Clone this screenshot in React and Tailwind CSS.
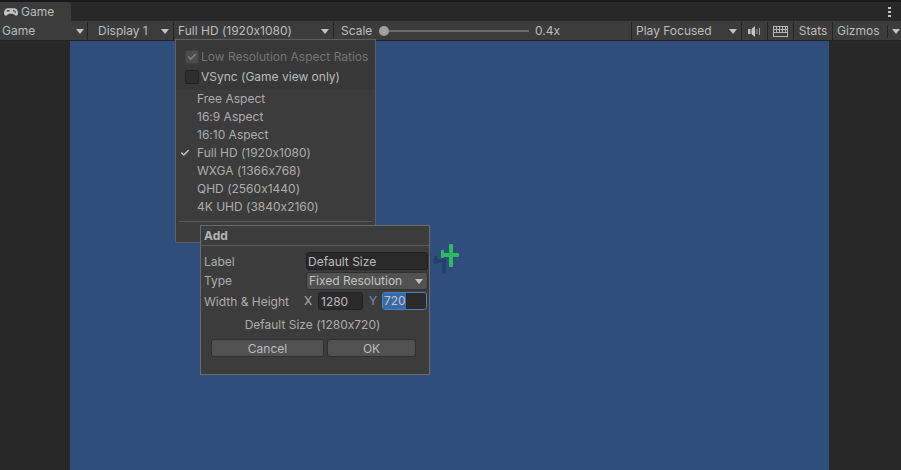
import { Check } from 'lucide-react';

const aspects = ['Free Aspect', '16:9 Aspect', '16:10 Aspect', 'Full HD (1920x1080)', 'WXGA (1366x768)', 'QHD (2560x1440)', '4K UHD (3840x2160)'];

function Arrow({ className = '' }) {
  return <span className={`w-0 h-0 border-l-[4.5px] border-r-[4.5px] border-t-[5px] border-l-transparent border-r-transparent border-t-[#c4c4c4] ${className}`} />;
}

function GamepadIcon() {
  return (
    <svg width="14" height="10" viewBox="0 0 15 10" className="mr-[3px]">
      <path d="M3.500 1h8C13.400 1 15 3.400 15 6c0 2.400-1.600 3.600-3 2.600L9.500 7h-4L3 8.600C1.600 9.600 0 8.400 0 6c0-2.600 1.600-5 3.500-5z" fill="#c4c4c4" />
      <rect x="3" y="3" width="3" height="1.500" fill="#3c3c3c" />
      <circle cx="10.500" cy="3.500" r="0.900" fill="#3c3c3c" />
      <circle cx="12" cy="5" r="0.900" fill="#3c3c3c" />
    </svg>
  );
}

function SpeakerIcon() {
  return (
    <svg width="13" height="11" viewBox="0 0 13 11" fill="#c4c4c4">
      <path d="M0 3h2.500v5H0zM3.500 3L7 0v11L3.500 8z" />
      <path d="M8.500 3v5h1V3zM11 2v7h1V2z" fill="#a0a0a0" />
    </svg>
  );
}

function KeyboardIcon() {
  return (
    <svg width="15" height="11" viewBox="0 0 15 11" fill="none" stroke="#b4b4b4" strokeWidth="1">
      <rect x="0.500" y="0.500" width="14" height="10" />
      <path d="M0.500 3.500h14M0.500 6.500h14M3.500 0.500v6M6.500 0.500v6M9.500 0.500v6M12.500 0.500v6" />
    </svg>
  );
}

function Toolbar() {
  return (
    <div className="flex h-5 pt-px bg-[#3c3c3c] border-b border-[#232323] text-[12px] text-[#bcbcbc]">
      <div className="w-[88px] flex items-center justify-between pl-[2px] pr-[3px] border-r border-[#232323]">
        <span>Game</span>
        <Arrow />
      </div>
      <div className="w-[86px] flex items-center justify-between pl-[10px] pr-[4px] border-r border-[#232323]">
        <span>Display 1</span>
        <Arrow />
      </div>
      <div className="w-[160px] flex items-center justify-between pl-[4px] pr-[4px] border-r border-[#232323]">
        <span>Full HD (1920x1080)</span>
        <Arrow />
      </div>
      <div className="w-[298px] flex items-center pl-[7px] border-r border-[#232323]">
        <span className="w-[38px]">Scale</span>
        <span className="relative w-[150px] h-[2px] bg-[#6a6a6a]">
          <span className="absolute left-0 -top-1 w-[10px] h-[10px] rounded-full bg-[#a0a0a0]" />
        </span>
        <span className="ml-[6px]">0.4x</span>
      </div>
      <div className="w-[110px] flex items-center justify-between pl-[4px] pr-[4px] border-r border-[#232323]">
        <span>Play Focused</span>
        <Arrow />
      </div>
      <div className="w-[26px] flex items-center justify-center border-r border-[#232323]">
        <SpeakerIcon />
      </div>
      <div className="w-[26px] flex items-center justify-center border-r border-[#232323]">
        <KeyboardIcon />
      </div>
      <div className="w-[39px] flex items-center justify-center border-r border-[#232323]">Stats</div>
      <div className="flex-1 flex items-center justify-between pl-[4px] pr-[1px]">
        <span>Gizmos</span>
        <span className="flex items-center gap-[4px] h-full">
          <span className="w-px h-[13px] bg-[#232323]" />
          <Arrow />
        </span>
      </div>
    </div>
  );
}

function AspectMenu() {
  return (
    <div className="absolute left-[175px] top-[39px] w-[201px] h-[204px] bg-[#3c3c3c] border border-[#5e5e5e] text-[12px] text-[#adadad]">
      <div className="h-[50px] pt-[7px] bg-[#383838]">
        <div className="flex items-center h-[20px] pl-[9px] text-[#757575]">
          <span className="w-[14px] h-[14px] mr-[2px] bg-[#4d4d4d] rounded-[2px] border border-[#3f3f3f] flex items-center justify-center">
            <Check size={10} strokeWidth={3} className="text-[#8a8a8a]" />
          </span>
          <span className="whitespace-nowrap">Low Resolution Aspect Ratios</span>
        </div>
        <div className="flex items-center h-[20px] pl-[9px] text-[#bcbcbc]">
          <span className="w-[14px] h-[14px] mr-[2px] bg-[#2e2e2e] rounded-[2px] border border-[#232323]" />
          <span>VSync (Game view only)</span>
        </div>
      </div>
      <div>
        {aspects.map((name) => (
          <div key={name} className="relative h-[18px] leading-[18px] pl-[21px]">
            {name === 'Full HD (1920x1080)' && (
              <Check size={10} strokeWidth={3.500} className="absolute left-[4px] top-1 text-[#c4c4c4]" />
            )}
            {name}
          </div>
        ))}
      </div>
      <div className="h-px bg-[#5a5a5a] mx-[3px] mt-[5px]" />
    </div>
  );
}

function AddDialog() {
  return (
    <div className="absolute left-[200px] top-[225px] w-[230px] h-[150px] bg-[#3c3c3c] border border-[#6a6a6a] text-[12px] text-[#adadad]">
      <div className="h-[20px] pl-[3px] leading-[20px] font-bold text-[#b4b4b4] border-b border-[#5a5a5a]">Add</div>
      <div className="flex items-center h-[20px] mt-[5px] pl-[3px]">
        <span className="w-[102px] pt-[2px]">Label</span>
        <span className="w-[122px] h-[18px] leading-[17px] pl-[1px] bg-[#2a2a2a] border border-[#212121] rounded-[3px] text-[#bcbcbc]">Default Size</span>
      </div>
      <div className="flex items-center h-[20px] pl-[3px]">
        <span className="w-[102px]">Type</span>
        <span className="w-[122px] h-[18px] flex items-center justify-between pl-[2px] pr-[4px] bg-[#515151] border border-[#303030] rounded-[3px] text-[#c4c4c4]">
          Fixed Resolution
          <Arrow />
        </span>
      </div>
      <div className="flex items-center h-[20px] pl-[3px]">
        <span className="w-[100px] pt-[1px]">Width &amp; Height</span>
        <span className="w-[14px]">X</span>
        <span className="w-[45px] h-[18px] leading-[17px] pl-[2px] bg-[#2a2a2a] border border-[#212121] rounded-[3px] text-[#bcbcbc]">1280</span>
        <span className="w-[19px] pl-[6px] text-[#6d93c7]">Y</span>
        <span className="w-[45px] h-[18px] leading-[16px] bg-[#2a2a2a] border border-[#4b7fc0] rounded-[3px] text-[#c4c4c4]">
          <span className="inline-block pl-[1px] bg-[#3a69a8] h-full">720</span>
        </span>
      </div>
      <div className="text-center h-[20px] leading-[20px] mt-[4px] pr-[5px]">Default Size (1280x720)</div>
      <div className="flex gap-[3px] mt-[4px] ml-[10px] text-[#bcbcbc]">
        <span className="w-[113px] h-[18px] leading-[17px] text-center bg-[#515151] border border-[#303030] rounded-[3px]">Cancel</span>
        <span className="w-[89px] h-[18px] leading-[17px] text-center bg-[#515151] border border-[#303030] rounded-[3px]">OK</span>
      </div>
    </div>
  );
}

function PlaneSprite() {
  return (
    <svg className="absolute left-[431px] top-[242px]" width="30" height="34" viewBox="0 0 30 34">
      <g fill="#26406c">
        <rect x="2" y="17" width="11" height="4" rx="1" />
        <rect x="3" y="14" width="3" height="8" rx="1" />
        <rect x="11" y="15" width="4" height="17" rx="1" />
      </g>
      <g fill="#2bbb63">
        <rect x="18" y="2" width="4" height="23" rx="1" />
        <rect x="12" y="11" width="16" height="4" rx="1" />
        <rect x="10" y="8" width="3" height="8" rx="1" />
      </g>
    </svg>
  );
}

export default function App() {
  return (
    <div className="relative w-[901px] h-[470px] overflow-hidden bg-[#282828] font-['Inter',sans-serif] [font-feature-settings:'calt'_0]">
      <div className="h-[2px] bg-[#191919]" />
      <div className="flex h-[19px] bg-[#282828]">
        <div className="w-[71px] flex items-center pl-1 bg-[#3c3c3c] rounded-tr-[3px] text-[12px] text-[#bcbcbc]">
          <GamepadIcon />
          <span>Game</span>
        </div>
        <div className="flex-1 flex justify-end pr-[10px]">
          <span className="flex flex-col justify-center gap-[2px]">
            <span className="w-[3px] h-[2px] bg-[#c4c4c4]" />
            <span className="w-[3px] h-[2px] bg-[#c4c4c4]" />
            <span className="w-[3px] h-[2px] bg-[#c4c4c4]" />
          </span>
        </div>
      </div>
      <Toolbar />
      <div className="flex justify-center h-[429px] pr-[2px]">
        <div className="w-[759px] h-full bg-[#2f4e7b]" />
      </div>
      <AspectMenu />
      <AddDialog />
      <PlaneSprite />
    </div>
  );
}
